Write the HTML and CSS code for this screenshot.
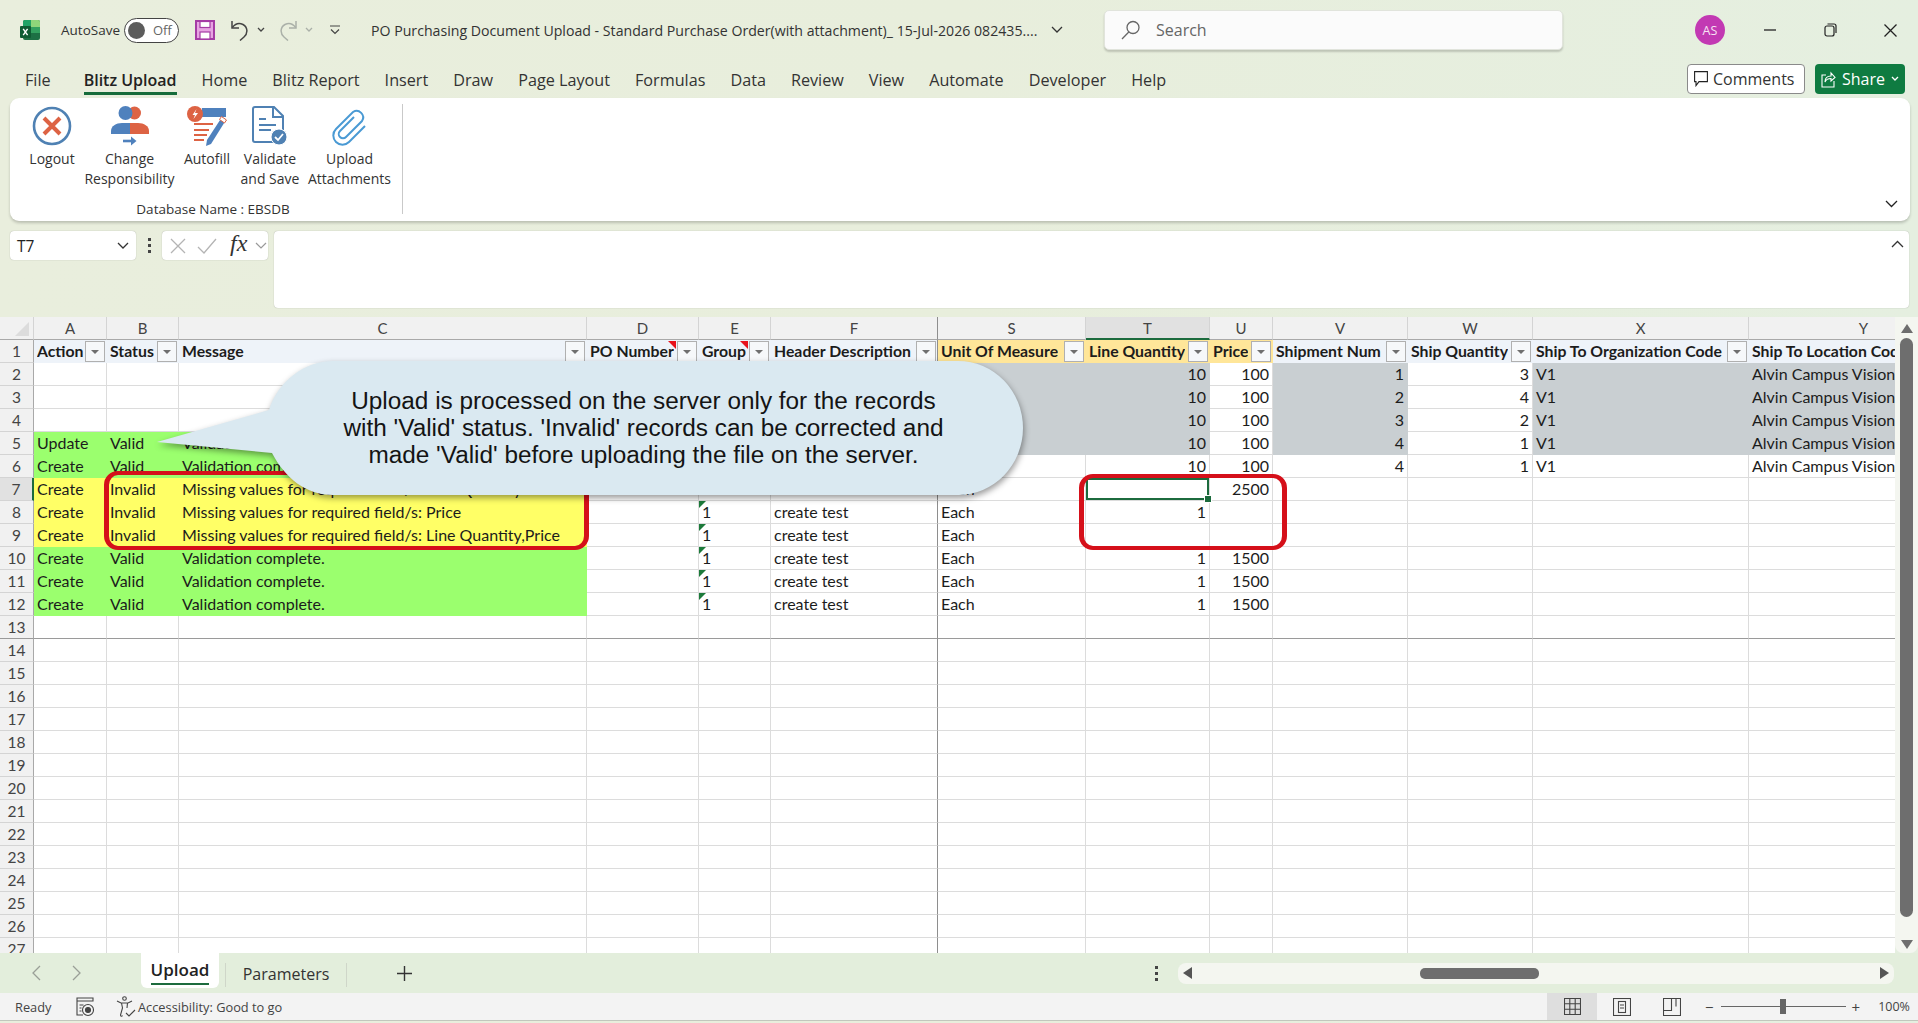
FILE: index.html
```html
<!DOCTYPE html>
<html>
<head>
    <meta charset="UTF-8">
    <title>PO Purchasing Document Upload</title>
    <link rel="stylesheet" href="styles.css">
</head>

<body>
<div class="app">
    <!-- title bar -->
    <div class="titlebar">
        <svg class="xl-logo" width="20" height="20" viewBox="0 0 20 20"><rect x="3" y="0" width="17" height="20" rx="2" fill="#1d7044"/><path d="M3 2a2 2 0 0 1 2-2h6v7H3z" fill="#21a366"/><path d="M11 0h7a2 2 0 0 1 2 2v5h-9z" fill="#8fd67a"/><rect x="11" y="7" width="9" height="6" fill="#33a15f"/><rect x="0" y="6" width="11" height="12" rx="1" fill="#0f5c33"/><path d="M3.2 8.8l4.4 6.4M7.6 8.8l-4.4 6.4" stroke="#fff" stroke-width="1.4"/></svg>
        <span class="autosave">AutoSave</span>
        <div class="toggle"><i class="knob"></i><span>Off</span></div>
        <svg class="save" width="20" height="20" viewBox="0 0 20 20"><path d="M1 1h18v18H1z" fill="#e7a3e2" stroke="#a53ba5" stroke-width="2"/><rect x="5" y="1.5" width="10" height="6" fill="#fff" stroke="#a53ba5" stroke-width="1.2"/><rect x="5" y="12" width="10" height="7" fill="#fff" stroke="#a53ba5" stroke-width="1.2"/></svg>
        <svg class="undo" width="18" height="21" viewBox="0 0 18 21" fill="none" stroke="#444" stroke-width="1.5"><path d="M1 1v7h7"/><path d="M1.3 7.5C4 4 8 2.5 12 4.5c5 3 5 9 1 12.5l-4 3.5"/></svg>
        <svg class="chev small-chev" width="8" height="6" viewBox="0 0 8 6" fill="none" stroke="#444" stroke-width="1.3"><path d="M1 1l3 3 3-3"/></svg>
        <svg class="redo" width="18" height="21" viewBox="0 0 18 21" fill="none" stroke="#aab0a8" stroke-width="1.5"><path d="M17 1v7h-7"/><path d="M16.7 7.5C14 4 10 2.5 6 4.5c-5 3-5 9-1 12.5l4 3.5"/></svg>
        <svg class="chev redo-chev" width="8" height="6" viewBox="0 0 8 6" fill="none" stroke="#aab0a8" stroke-width="1.3"><path d="M1 1l3 3 3-3"/></svg>
        <svg class="custom" width="10" height="10" viewBox="0 0 10 10" fill="none" stroke="#444" stroke-width="1.2"><path d="M0 1h10M1 4.5l4 4 4-4"/></svg>
        <span class="doc-title">PO Purchasing Document Upload - Standard Purchase Order(with attachment)_ 15-Jul-2026 082435....</span>
        <svg class="doc-chev" width="12" height="8" viewBox="0 0 12 8" fill="none" stroke="#333" stroke-width="1.3"><path d="M1 1l5 5 5-5"/></svg>
        <div class="search">
            <svg width="20" height="20" viewBox="0 0 20 20" fill="none" stroke="#666" stroke-width="1.3"><circle cx="12" cy="7.5" r="6"/><path d="M7.8 12L1 19"/></svg>
            <span>Search</span>
        </div>
        <div class="avatar">AS</div>
        <svg class="win-min" width="12" height="2" viewBox="0 0 12 2"><path d="M0 1h12" stroke="#222" stroke-width="1.3"/></svg>
        <svg class="win-max" width="13" height="14" viewBox="0 0 13 14" fill="none" stroke="#222" stroke-width="1.2"><rect x="1" y="3" width="9" height="10" rx="2"/><path d="M3.5 1H10a2 2 0 0 1 2 2v7"/></svg>
        <svg class="win-close" width="13" height="13" viewBox="0 0 13 13" fill="none" stroke="#222" stroke-width="1.3"><path d="M.5.5l12 12M12.5.5l-12 12"/></svg>
    </div>

    <!-- ribbon tabs -->
    <div class="tabbar">
        <a class="file">File</a>
        <a class="active">Blitz Upload</a>
        <a>Home</a>
        <a>Blitz Report</a>
        <a>Insert</a>
        <a>Draw</a>
        <a>Page Layout</a>
        <a>Formulas</a>
        <a>Data</a>
        <a>Review</a>
        <a>View</a>
        <a>Automate</a>
        <a>Developer</a>
        <a>Help</a>
        <div class="comments">
            <svg width="14" height="16" viewBox="0 0 14 16" fill="none" stroke="#222" stroke-width="1.1"><path d="M.6.6h12.8v10H5l-3 4v-4H.6z"/></svg>
            <span>Comments</span>
        </div>
        <div class="share">
            <svg width="15" height="18" viewBox="0 0 15 18" fill="none" stroke="#fff" stroke-width="1.1"><path d="M5 5H1v12h12v-6"/><path d="M4 12c0-4 2-6 6-6V3l4 4.5L10 11V8.5c-3 0-5 1-6 3.5z"/></svg>
            <span>Share</span>
            <svg width="8" height="6" viewBox="0 0 8 6" fill="none" stroke="#fff" stroke-width="1.3"><path d="M1 1l3 3 3-3"/></svg>
        </div>
    </div>

    <!-- ribbon -->
    <div class="ribbon">
        <div class="rb-group">
            <div class="rb-buttons">
                <div class="rb-btn w-logout">
                    <svg width="40" height="40" viewBox="0 0 40 40"><circle cx="20" cy="20" r="18" fill="#fff" stroke="#4f81b3" stroke-width="2.6"/><path d="M12 12l16 16M28 12L12 28" stroke="#dd6344" stroke-width="4"/></svg>
                    <span>Logout</span>
                </div>
                <div class="rb-btn w-change">
                    <svg width="40" height="40" viewBox="0 0 40 40"><circle cx="24.5" cy="7" r="6.5" fill="#dd6344"/><circle cx="15.5" cy="7" r="7" fill="#4f81bd"/><path d="M1 28v-3c0-5 5-8 11-8h8v11z" fill="#4f81bd"/><path d="M20 17h8c6 0 11 3 11 8v3H20z" fill="#dd6344"/><path d="M13 35h10" stroke="#4f81bd" stroke-width="2.6"/><path d="M21 30.5l5.5 4.5-5.5 4.5z" fill="#4f81bd"/></svg>
                    <span>Change<br>Responsibility</span>
                </div>
                <div class="rb-btn w-autofill">
                    <svg width="40" height="40" viewBox="0 0 40 40"><rect x="15" y="2" width="24" height="9" fill="#4f81bd"/><g stroke="#dd6344" stroke-width="1.8"><path d="M7 18h19M7 24h15M7 29h13M7 34h10"/></g><circle cx="8" cy="8" r="8" fill="#dd6344"/><path d="M9.5 3L5.5 9H8l-1.5 4L11 7H8z" fill="#fff"/><path d="M35 11l4 3-15 24-5 2 1-6z" fill="#4f81bd"/><path d="M34.5 10.5l5 3.500-2 3-5-3.500z" fill="#fff" stroke="#dd6344" stroke-width="1"/></svg>
                    <span>Autofill</span>
                </div>
                <div class="rb-btn w-validate">
                    <svg width="36" height="40" viewBox="0 0 36 40"><path d="M3 1h19l9 9v24a2 2 0 0 1-2 2H3a2 2 0 0 1-2-2V3a2 2 0 0 1 2-2z" fill="#fff" stroke="#4f81b3" stroke-width="2"/><path d="M21 1v10h10" fill="none" stroke="#4f81b3" stroke-width="2"/><path d="M7 13h7M7 19h17M7 24h12" stroke="#4f81b3" stroke-width="1.8"/><circle cx="27" cy="31" r="8" fill="#4f81b3" stroke="#fff" stroke-width="1"/><path d="M23 31l3 3 5-6" fill="none" stroke="#fff" stroke-width="1.8"/></svg>
                    <span>Validate<br>and Save</span>
                </div>
                <div class="rb-btn w-upload">
                    <svg width="36" height="40" viewBox="0 -3 36 40" fill="none" stroke="#4a9ad4" stroke-width="2"><path d="M22 8L8 22a4 4 0 0 0 6 6L30 12a6.5 6.5 0 0 0-9-9L4 20a9 9 0 0 0 13 13L33 17"/></svg>
                    <span>Upload<br>Attachments</span>
                </div>
            </div>
            <div class="rb-caption">Database Name : EBSDB</div>
        </div>
        <svg class="rb-collapse" width="13" height="8" viewBox="0 0 13 8" fill="none" stroke="#222" stroke-width="1.3"><path d="M1 1l5.5 5.500L12 1"/></svg>
    </div>

    <!-- formula bar -->
    <div class="formulabar">
        <div class="namebox">
            <span>T7</span>
            <svg width="12" height="8" viewBox="0 0 12 8" fill="none" stroke="#333" stroke-width="1.3"><path d="M1 1l5 5 5-5"/></svg>
        </div>
        <div class="fb-dots"><i></i><i></i><i></i></div>
        <div class="fb-tools">
            <svg width="16" height="16" viewBox="0 0 16 16" stroke="#b4b4b4" stroke-width="1.3"><path d="M1 1l14 14M15 1L1 15"/></svg>
            <svg width="20" height="16" viewBox="0 0 20 16" fill="none" stroke="#b4b4b4" stroke-width="1.3"><path d="M1 9l6 6L19 1"/></svg>
            <span class="fx">fx</span>
            <svg width="12" height="8" viewBox="0 0 12 8" fill="none" stroke="#999" stroke-width="1.2"><path d="M1 1l5 5 5-5"/></svg>
        </div>
        <div class="fb-input">
            <svg width="13" height="8" viewBox="0 0 13 8" fill="none" stroke="#333" stroke-width="1.3"><path d="M1 7l5.5-5.500L12 7"/></svg>
        </div>
    </div>

    <!-- grid -->
    <div class="gridarea">
        <div class="sheet-wrap">
            <table class="sheet">
                <colgroup>
                    <col class="c-rh"><col class="c-a"><col class="c-b"><col class="c-c"><col class="c-d"><col class="c-e"><col class="c-f"><col class="c-s"><col class="c-t"><col class="c-u"><col class="c-v"><col class="c-w"><col class="c-x"><col class="c-y">
                </colgroup>
                <tr class="letters"><th class="corner"></th><th>A</th><th>B</th><th>C</th><th>D</th><th>E</th><th>F</th><th>S</th><th class="cur-col">T</th><th>U</th><th>V</th><th>W</th><th>X</th><th>Y</th></tr>
                <tr class="heads"><th class="rh">1</th>
                    <td><div class="hd"><span>Action</span><i class="fbtn"></i></div></td>
                    <td><div class="hd"><span>Status</span><i class="fbtn"></i></div></td>
                    <td><div class="hd"><span>Message</span><i class="fbtn"></i></div></td>
                    <td><div class="hd"><span>PO Number</span><i class="fbtn note"></i></div></td>
                    <td><div class="hd"><span>Group</span><i class="fbtn note"></i></div></td>
                    <td><div class="hd"><span>Header Description</span><i class="fbtn"></i></div></td>
                    <td class="req"><div class="hd"><span>Unit Of Measure</span><i class="fbtn"></i></div></td>
                    <td class="req"><div class="hd"><span>Line Quantity</span><i class="fbtn"></i></div></td>
                    <td class="req"><div class="hd"><span>Price</span><i class="fbtn"></i></div></td>
                    <td><div class="hd"><span>Shipment Num</span><i class="fbtn"></i></div></td>
                    <td><div class="hd"><span>Ship Quantity</span><i class="fbtn"></i></div></td>
                    <td><div class="hd"><span>Ship To Organization Code</span><i class="fbtn"></i></div></td>
                    <td><div class="hd"><span>Ship To Location Code</span><i class="fbtn"></i></div></td>
                </tr>
                <tr><th class="rh">2</th><td></td><td></td><td></td><td></td><td></td><td></td><td class="gr"></td><td class="gr num">10</td><td class="num">100</td><td class="gr num">1</td><td class="num">3</td><td class="gr">V1</td><td class="gr">Alvin Campus Vision</td></tr>
                <tr><th class="rh">3</th><td></td><td></td><td></td><td></td><td></td><td></td><td class="gr"></td><td class="gr num">10</td><td class="num">100</td><td class="gr num">2</td><td class="num">4</td><td class="gr">V1</td><td class="gr">Alvin Campus Vision</td></tr>
                <tr><th class="rh">4</th><td></td><td></td><td></td><td></td><td></td><td></td><td class="gr"></td><td class="gr num">10</td><td class="num">100</td><td class="gr num">3</td><td class="num">2</td><td class="gr">V1</td><td class="gr">Alvin Campus Vision</td></tr>
                <tr><th class="rh">5</th><td class="ok">Update</td><td class="ok">Valid</td><td class="ok">Validation complete.</td><td></td><td></td><td></td><td class="gr"></td><td class="gr num">10</td><td class="num">100</td><td class="gr num">4</td><td class="num">1</td><td class="gr">V1</td><td class="gr">Alvin Campus Vision</td></tr>
                <tr><th class="rh">6</th><td class="ok">Create</td><td class="ok">Valid</td><td class="ok">Validation complete.</td><td></td><td></td><td></td><td></td><td class="num">10</td><td class="num">100</td><td class="num">4</td><td class="num">1</td><td>V1</td><td>Alvin Campus Vision</td></tr>
                <tr><th class="rh cur-row">7</th><td class="bad">Create</td><td class="bad">Invalid</td><td class="bad">Missing values for required field/s: Line Quantity</td><td></td><td class="tri">1</td><td>create test</td><td>Each</td><td class="sel"></td><td class="num">2500</td><td></td><td></td><td></td><td></td></tr>
                <tr><th class="rh">8</th><td class="bad">Create</td><td class="bad">Invalid</td><td class="bad">Missing values for required field/s: Price</td><td></td><td class="tri">1</td><td>create test</td><td>Each</td><td class="num">1</td><td></td><td></td><td></td><td></td><td></td></tr>
                <tr><th class="rh">9</th><td class="bad">Create</td><td class="bad">Invalid</td><td class="bad">Missing values for required field/s: Line Quantity,Price</td><td></td><td class="tri">1</td><td>create test</td><td>Each</td><td></td><td></td><td></td><td></td><td></td><td></td></tr>
                <tr><th class="rh">10</th><td class="ok">Create</td><td class="ok">Valid</td><td class="ok">Validation complete.</td><td></td><td class="tri">1</td><td>create test</td><td>Each</td><td class="num">1</td><td class="num">1500</td><td></td><td></td><td></td><td></td></tr>
                <tr><th class="rh">11</th><td class="ok">Create</td><td class="ok">Valid</td><td class="ok">Validation complete.</td><td></td><td class="tri">1</td><td>create test</td><td>Each</td><td class="num">1</td><td class="num">1500</td><td></td><td></td><td></td><td></td></tr>
                <tr><th class="rh">12</th><td class="ok">Create</td><td class="ok">Valid</td><td class="ok">Validation complete.</td><td></td><td class="tri">1</td><td>create test</td><td>Each</td><td class="num">1</td><td class="num">1500</td><td></td><td></td><td></td><td></td></tr>
                <tr class="split"><th class="rh">13</th><td></td><td></td><td></td><td></td><td></td><td></td><td></td><td></td><td></td><td></td><td></td><td></td><td></td></tr>
                <tr><th class="rh">14</th><td></td><td></td><td></td><td></td><td></td><td></td><td></td><td></td><td></td><td></td><td></td><td></td><td></td></tr>
                <tr><th class="rh">15</th><td></td><td></td><td></td><td></td><td></td><td></td><td></td><td></td><td></td><td></td><td></td><td></td><td></td></tr>
                <tr><th class="rh">16</th><td></td><td></td><td></td><td></td><td></td><td></td><td></td><td></td><td></td><td></td><td></td><td></td><td></td></tr>
                <tr><th class="rh">17</th><td></td><td></td><td></td><td></td><td></td><td></td><td></td><td></td><td></td><td></td><td></td><td></td><td></td></tr>
                <tr><th class="rh">18</th><td></td><td></td><td></td><td></td><td></td><td></td><td></td><td></td><td></td><td></td><td></td><td></td><td></td></tr>
                <tr><th class="rh">19</th><td></td><td></td><td></td><td></td><td></td><td></td><td></td><td></td><td></td><td></td><td></td><td></td><td></td></tr>
                <tr><th class="rh">20</th><td></td><td></td><td></td><td></td><td></td><td></td><td></td><td></td><td></td><td></td><td></td><td></td><td></td></tr>
                <tr><th class="rh">21</th><td></td><td></td><td></td><td></td><td></td><td></td><td></td><td></td><td></td><td></td><td></td><td></td><td></td></tr>
                <tr><th class="rh">22</th><td></td><td></td><td></td><td></td><td></td><td></td><td></td><td></td><td></td><td></td><td></td><td></td><td></td></tr>
                <tr><th class="rh">23</th><td></td><td></td><td></td><td></td><td></td><td></td><td></td><td></td><td></td><td></td><td></td><td></td><td></td></tr>
                <tr><th class="rh">24</th><td></td><td></td><td></td><td></td><td></td><td></td><td></td><td></td><td></td><td></td><td></td><td></td><td></td></tr>
                <tr><th class="rh">25</th><td></td><td></td><td></td><td></td><td></td><td></td><td></td><td></td><td></td><td></td><td></td><td></td><td></td></tr>
                <tr><th class="rh">26</th><td></td><td></td><td></td><td></td><td></td><td></td><td></td><td></td><td></td><td></td><td></td><td></td><td></td></tr>
                <tr><th class="rh">27</th><td></td><td></td><td></td><td></td><td></td><td></td><td></td><td></td><td></td><td></td><td></td><td></td><td></td></tr>
            </table>
        </div>
        <div class="vscroll">
            <i class="arr-up"></i>
            <i class="vthumb"></i>
            <i class="arr-down"></i>
        </div>
    </div>

    <!-- sheet tabs -->
    <div class="sheetbar">
        <svg class="nav-l" width="9" height="16" viewBox="0 0 9 16" fill="none" stroke="#9a9f97" stroke-width="1.3"><path d="M8 1L1 8l7 7"/></svg>
        <svg class="nav-r" width="9" height="16" viewBox="0 0 9 16" fill="none" stroke="#9a9f97" stroke-width="1.3"><path d="M1 1l7 7-7 7"/></svg>
        <div class="tab-on"><span>Upload</span></div>
        <i class="tab-sep first"></i>
        <div class="tab-off">Parameters</div>
        <i class="tab-sep"></i>
        <svg class="tab-add" width="15" height="15" viewBox="0 0 15 15" stroke="#333" stroke-width="1.4"><path d="M7.5 0v15M0 7.5h15"/></svg>
        <div class="split-dots"><i></i><i></i><i></i></div>
        <div class="hscroll">
            <i class="arr-left"></i>
            <i class="hthumb"></i>
            <i class="arr-right"></i>
        </div>
    </div>

    <!-- status bar -->
    <div class="statusbar">
        <span class="ready">Ready</span>
        <svg class="macro" width="18" height="20" viewBox="0 0 18 20" fill="none" stroke="#444" stroke-width="1.1"><path d="M1 1h16v3H1zM1 4v14h6"/><path d="M3.5 8h4M3.5 11h2M3.5 14h2"/><circle cx="12" cy="13" r="5.5"/><circle cx="12" cy="13" r="2.5" fill="#444"/></svg>
        <svg class="a11y" width="20" height="22" viewBox="0 0 20 22" fill="none" stroke="#444" stroke-width="1.1"><circle cx="8.5" cy="2.5" r="1.8"/><path d="M1 5l4 2h7l4-2M5.5 7l1 5-2 7c0 1.5 1.5 1.5 2 .5M11.5 7l-.5 5"/><path d="M10 17l3 3 6-6"/></svg>
        <span class="a11y-text">Accessibility: Good to go</span>
        <div class="view-btn on">
            <svg width="17" height="17" viewBox="0 0 17 17" fill="none" stroke="#444" stroke-width="1.1"><path d="M.5.5h16v16H.5zM.5 5.8h16M.5 11.2h16M5.8.5v16M11.2.5v16"/></svg>
        </div>
        <div class="view-btn">
            <svg width="18" height="18" viewBox="0 0 18 18" fill="none" stroke="#444" stroke-width="1.1"><rect x=".5" y=".5" width="17" height="17"/><rect x="5.5" y="3.5" width="7" height="11"/><path d="M7 7h4M7 10h4"/></svg>
        </div>
        <div class="view-btn">
            <svg width="18" height="18" viewBox="0 0 18 18" fill="none" stroke="#444" stroke-width="1.1"><path d="M.5.5h17v17H.5zM.5 12.5h8V.5M13 .5v8"/></svg>
        </div>
        <span class="zoom-minus">−</span>
        <div class="zoom-track"><i></i></div>
        <span class="zoom-plus">+</span>
        <span class="zoom-val">100%</span>
    </div>

    <!-- annotations over the sheet -->
    <div class="redbox box-left"></div>
    <div class="redbox box-right"></div>
    <div class="callout">
        <svg width="880" height="150" viewBox="150 355 880 150"><path d="M157 442L269 410C278 381 305 361 333 361H958A65 67 0 0 1 958 495H333C306 495 285 478 272 453Z" fill="#dae9f1"/></svg>
        <p>Upload is processed on the server only for the records<br>with 'Valid' status. 'Invalid' records can be corrected and<br>made 'Valid' before uploading the file on the server.</p>
    </div>
</div>
</body>
</html>
```

FILE: styles.css
```css
* {
    box-sizing: border-box;
}
html, body {
    margin: 0;
    height: 100%;
    overflow: hidden;
}
body {
    font-family: "Open Sans", "Noto Sans", sans-serif;
    color: #222;
    background-color: #e6eedd;
}
.app {
    position: relative;
    width: 1918px;
    height: 1023px;
    display: flex;
    flex-direction: column;
    background: linear-gradient(90deg, #e9eedd 0%, #e8eedc 50%, #e5efe0 100%);
}

/* title bar */
.titlebar {
    height: 60px;
    display: flex;
    align-items: center;
    flex: none;
}
.xl-logo { margin-left: 20px; }
.autosave {
    margin-left: 21px;
    font-size: 13.5px;
    width: 60px;
    color: #333;
}
.toggle {
    margin-left: 3px;
    width: 55px;
    height: 25px;
    border: 1.5px solid #444;
    border-radius: 13px;
    background-color: #fff;
    display: flex;
    align-items: center;
    padding-left: 3px;
    font-size: 13px;
    color: #666;
}
.knob {
    width: 17px;
    height: 17px;
    border-radius: 50%;
    background-color: #5c5c5c;
    margin-right: 8px;
}
.save { margin-left: 16px; }
.undo { margin-left: 16px; }
.small-chev { margin-left: 8px; }
.redo { margin-left: 14px; }
.redo-chev { margin-left: 8px; }
.custom { margin-left: 17px; }
.doc-title {
    margin-left: 31px;
    font-size: 14.15px;
    width: 670px;
    white-space: nowrap;
    overflow: hidden;
    color: #333;
}
.doc-chev { margin-left: 10px; }
.search {
    margin-left: 41px;
    width: 459px;
    height: 40px;
    margin-top: -1px;
    background-color: #fbfbfb;
    border: 1px solid #e1e4dc;
    border-radius: 5px;
    box-shadow: 0 2px 2px rgba(0, 0, 0, .18);
    display: flex;
    align-items: center;
    padding-left: 16px;
    font-size: 16px;
    color: #666;
}
.search span { margin-left: 15px; }
.avatar {
    margin-left: 132px;
    width: 30px;
    height: 30px;
    border-radius: 50%;
    background-color: #c239b3;
    color: #f7e3f4;
    font-size: 12.5px;
    display: flex;
    align-items: center;
    justify-content: center;
}
.win-min { margin-left: 39px; }
.win-max { margin-left: 48px; }
.win-close { margin-left: 47px; }

/* ribbon tabs */
.tabbar {
    height: 38px;
    flex: none;
    display: flex;
    align-items: flex-start;
    padding-left: 25px;
    gap: 25px;
    font-size: 16.2px;
    color: #333;
}
.tabbar a {
    height: 35px;
    line-height: 41px;
    white-space: nowrap;
}
.tabbar a.file { margin-right: 8px; }
.tabbar a.active {
    font-weight: 600;
    font-size: 16px;
    color: #222;
    border-bottom: 3px solid #166c3b;
}
.comments {
    position: absolute;
    left: 1687px;
    top: 64px;
    width: 118px;
    height: 30px;
    background-color: #fff;
    border: 1px solid #8a8a8a;
    border-radius: 4px;
    display: flex;
    align-items: center;
    padding-left: 6px;
    gap: 5px;
    font-size: 16px;
}
.share {
    position: absolute;
    left: 1815px;
    top: 64px;
    width: 90px;
    height: 30px;
    background-color: #0f7b41;
    color: #fff;
    border-radius: 4px;
    display: flex;
    align-items: center;
    padding-left: 6px;
    gap: 6px;
    font-size: 16px;
}

/* ribbon */
.ribbon {
    position: relative;
    flex: none;
    height: 123px;
    margin: 0 8px 0 10px;
    background-color: #fff;
    border-radius: 9px;
    box-shadow: 0 2px 3px rgba(0, 0, 0, .2);
}
.rb-group {
    width: 393px;
    height: 110px;
    margin-top: 6px;
    position: absolute;
    top: 0;
    left: 0;
    border-right: 1px solid #c9c9c9;
    padding: 2px 0 0 14px;
    display: flex;
    flex-direction: column;
}
.rb-buttons {
    display: flex;
    height: 86px;
}
.rb-btn {
    display: flex;
    flex-direction: column;
    align-items: center;
    text-align: center;
    font-size: 14px;
    line-height: 20px;
    color: #333;
    white-space: nowrap;
}
.rb-btn svg { flex: none; height: 40px; margin-bottom: 2.5px; }
.w-logout { width: 56px; }
.w-change { width: 99px; }
.w-autofill { width: 56px; }
.w-validate { width: 70px; }
.w-upload { width: 89px; }
.rb-caption {
    margin-left: -14px;
    text-align: center;
    font-size: 13.5px;
    line-height: 18px;
    margin-top: 11px;
    padding-left: 14px;
    color: #333;
    white-space: nowrap;
}
.rb-collapse {
    position: absolute;
    right: 12px;
    bottom: 13px;
}

/* formula bar */
.formulabar {
    flex: none;
    height: 77px;
    margin: 10px 9px 9px 10px;
    display: flex;
    align-items: flex-start;
}
.namebox {
    width: 126px;
    height: 29px;
    background-color: #fff;
    border-radius: 4px;
    box-shadow: 0 0 1px rgba(0, 0, 0, .35);
    display: flex;
    align-items: center;
    justify-content: space-between;
    padding: 0 7px;
    font-size: 15.5px;
}
.fb-dots {
    width: 26px;
    height: 29px;
    display: flex;
    flex-direction: column;
    align-items: center;
    justify-content: center;
    gap: 3px;
}
.fb-dots i {
    width: 3px;
    height: 3px;
    background-color: #444;
}
.fb-tools {
    width: 106px;
    height: 29px;
    background-color: #fff;
    border-radius: 4px;
    box-shadow: 0 0 1px rgba(0, 0, 0, .35);
    display: flex;
    align-items: center;
    padding-left: 8px;
    gap: 5px;
}
.fb-tools svg:nth-child(2) { margin-left: 6px; }
.fx {
    font-family: "Liberation Serif", serif;
    font-style: italic;
    font-size: 24px;
    color: #333;
    margin: -4px 3px 0 8px;
}
.fb-input {
    position: relative;
    margin-left: 6px;
    flex: 1;
    height: 77px;
    background-color: #fff;
    border-radius: 4px;
    box-shadow: 0 0 1px rgba(0, 0, 0, .35);
}
.fb-input svg {
    position: absolute;
    right: 5px;
    top: 9px;
}

/* grid */
.gridarea {
    flex: none;
    height: 636px;
    display: flex;
}
.sheet-wrap {
    width: 1895px;
    height: 636px;
    overflow: hidden;
    background-color: #fff;
}
.sheet {
    table-layout: fixed;
    width: 1979px;
    border-collapse: separate;
    border-spacing: 0;
    font-family: Lato, "Open Sans", sans-serif;
    font-size: 16px;
    color: #1c1c1c;
}
.c-rh { width: 34px; }
.c-a { width: 73px; }
.c-b { width: 72px; }
.c-c { width: 408px; }
.c-d { width: 112px; }
.c-e { width: 72px; }
.c-f { width: 167px; }
.c-s { width: 148px; }
.c-t { width: 124px; }
.c-u { width: 63px; }
.c-v { width: 135px; }
.c-w { width: 125px; }
.c-x { width: 216px; }
.c-y { width: 230px; }
.sheet tr { height: 23px; }
.sheet td {
    position: relative;
    height: 23px;
    padding: 0 3px 2px 3px;
    border-right: 1px solid #dcdcdc;
    border-bottom: 1px solid #dcdcdc;
    white-space: nowrap;
    overflow: hidden;
    vertical-align: middle;
}
.letters th {
    height: 23px;
    padding: 0;
    background-color: #f1f1f1;
    border-right: 1px solid #d4d4d4;
    border-bottom: 1px solid #a9a9a9;
    font-weight: normal;
    font-size: 15px;
    color: #444;
}
.letters .cur-col {
    background-color: #e1e1e1;
    border-bottom: 2px solid #1c6b3d;
}
.corner {
    position: relative;
}
.corner::after {
    content: "";
    position: absolute;
    right: 4px;
    bottom: 3px;
    border-style: solid;
    border-width: 0 0 14px 14px;
    border-color: transparent transparent #dcdcdc transparent;
}
.rh {
    padding: 0;
    background-color: #f1f1f1;
    border-right: 1px solid #a9a9a9;
    border-bottom: 1px solid #d4d4d4;
    font-weight: normal;
    font-size: 15.5px;
    color: #444;
}
.cur-row {
    background-color: #e1e1e1;
    border-right: 2px solid #1c6b3d;
}
/* frozen pane lines */
.sheet tr > :nth-child(7) { border-right-color: #8e8e8e; }
.split td, .split th { border-bottom-color: #9a9a9a; }

.sheet .heads td {
    padding: 0 0 0 3px;
    background-color: #eef3f9;
    border-right-color: #eef3f9;
    border-bottom-color: #eef3f9;
    font-weight: bold;
    font-size: 15.8px;
}
.sheet .heads td.req {
    background-color: #ffe699;
    border-right-color: #ffe699;
    border-bottom-color: #ffe699;
}
.sheet .heads td:nth-child(7) { border-right-color: #8e8e8e; }
.hd {
    display: flex;
    align-items: center;
    justify-content: space-between;
    height: 22px;
}
.hd span {
    overflow: hidden;
    white-space: nowrap;
    margin-top: -2px;
}
.fbtn {
    position: relative;
    flex: none;
    width: 20px;
    height: 21px;
    background-color: #f6f8fa;
    border: 1px solid #b0b0b0;
    margin-right: 1px;
}
.fbtn::after {
    content: "";
    position: absolute;
    left: 5px;
    top: 8px;
    border-style: solid;
    border-width: 4px 4px 0 4px;
    border-color: #6f6f6f transparent transparent transparent;
}
.fbtn.note::before {
    content: "";
    position: absolute;
    right: 20px;
    top: -1px;
    border-style: solid;
    border-width: 0 8px 8px 0;
    border-color: transparent #e8121c transparent transparent;
}
.sheet td.num { text-align: right; }
.sheet td.gr {
    background-color: #c9cfd2;
    border-color: #c9cfd2;
}
.sheet td.ok {
    background-color: #9bff6e;
    border-color: #9bff6e;
}
.sheet td.bad {
    background-color: #ffff66;
    border-color: #ffff66;
}
.sheet td.tri::before {
    content: "";
    position: absolute;
    left: 0;
    top: 0;
    border-style: solid;
    border-width: 7px 7px 0 0;
    border-color: #1c7a3a transparent transparent transparent;
}
.sheet td.sel {
    overflow: visible;
    box-shadow: inset 0 0 0 2px #1c6b3d;
}
.sel::after {
    content: "";
    position: absolute;
    right: -3px;
    bottom: -3px;
    width: 6px;
    height: 6px;
    background-color: #1c6b3d;
    border: 1px solid #fff;
    z-index: 1;
}
.vscroll {
    width: 23px;
    margin-left: 0;
    background-color: #f4f6f0;
    border-radius: 0 0 8px 8px;
    display: flex;
    flex-direction: column;
    align-items: center;
    padding-top: 7px;
}
.arr-up {
    border-style: solid;
    border-width: 0 6px 9px 6px;
    border-color: transparent transparent #6e6e6e transparent;
}
.vthumb {
    width: 13px;
    height: 579px;
    margin-top: 5px;
    border-radius: 7px;
    background-color: #6e6e6e;
}
.arr-down {
    margin-top: 23px;
    border-style: solid;
    border-width: 9px 6px 0 6px;
    border-color: #6e6e6e transparent transparent transparent;
}

/* sheet tabs */
.sheetbar {
    flex: none;
    height: 40px;
    display: flex;
    align-items: center;
    background-color: #e3eedc;
    font-size: 16px;
}
.nav-l { margin-left: 32px; }
.nav-r { margin-left: 31px; }
.tab-on {
    margin-left: 60px;
    align-self: flex-start;
    width: 78px;
    height: 35px;
    background-color: #fff;
    border-radius: 0 0 6px 6px;
    text-align: center;
    font-weight: 600;
    font-size: 17px;
}
.tab-on span {
    display: inline-block;
    height: 32px;
    line-height: 33px;
    border-bottom: 2px solid #1c6b3d;
}
.tab-sep {
    width: 1px;
    height: 24px;
    background-color: #cfd6c9;
    margin-top: 3px;
}
.tab-sep.first { margin-left: 6px; }
.tab-off {
    width: 120px;
    text-align: center;
    margin-top: 1px;
    color: #333;
}
.tab-add { margin-left: 50px; }
.split-dots {
    margin-left: 743px;
    display: flex;
    flex-direction: column;
    gap: 3px;
}
.split-dots i {
    width: 3px;
    height: 3px;
    background-color: #444;
}
.hscroll {
    margin-left: 20px;
    width: 716px;
    height: 21px;
    background-color: #f4f6f0;
    border-radius: 8px;
    display: flex;
    align-items: center;
    padding: 0 5px;
}
.arr-left {
    border-style: solid;
    border-width: 6px 9px 6px 0;
    border-color: transparent #555 transparent transparent;
}
.hthumb {
    width: 119px;
    height: 11px;
    margin-left: 228px;
    border-radius: 5px;
    background-color: #6e6e6e;
}
.arr-right {
    margin-left: auto;
    border-style: solid;
    border-width: 6px 0 6px 9px;
    border-color: transparent transparent transparent #555;
}

/* status bar */
.statusbar {
    flex: none;
    height: 28px;
    display: flex;
    align-items: center;
    background-color: #f3f3f3;
    border-bottom: 1px solid #c2c7bd;
    font-size: 12.8px;
    color: #444;
}
.ready { margin-left: 15px; width: 40px; }
.macro { margin-left: 21px; }
.a11y { margin-left: 22px; }
.a11y-text { margin-left: 2px; width: 150px; white-space: nowrap; }
.view-btn {
    width: 50px;
    height: 27px;
    display: flex;
    align-items: center;
    justify-content: center;
}
.view-btn.on {
    margin-left: 1259px;
    background-color: #dedede;
}
.zoom-minus { margin-left: 8px; font-size: 15px; }
.zoom-track {
    position: relative;
    margin-left: 7px;
    width: 125px;
    height: 1px;
    background-color: #666;
}
.zoom-track i {
    position: absolute;
    left: 59px;
    top: -7px;
    width: 6px;
    height: 15px;
    background-color: #666;
}
.zoom-plus { margin-left: 6px; font-size: 15px; }
.zoom-val { margin-left: 18px; font-size: 12.5px; }

/* annotations */
.redbox {
    position: absolute;
    border-style: solid;
    border-color: #d5101a;
    border-width: 4px 5px;
    border-radius: 14px;
}
.box-left {
    left: 104px;
    top: 471px;
    width: 485px;
    height: 79px;
}
.box-right {
    left: 1079px;
    top: 474px;
    width: 208px;
    height: 76px;
}
.callout {
    position: absolute;
    left: 150px;
    top: 355px;
    width: 880px;
    height: 150px;
}
.callout svg {
    display: block;
    filter: drop-shadow(1px 3px 3px rgba(0, 0, 0, .4));
}
.callout p {
    position: absolute;
    left: 116px;
    top: 5px;
    width: 755px;
    height: 134px;
    margin: 0;
    display: flex;
    align-items: center;
    justify-content: center;
    text-align: center;
    font-family: "Liberation Sans", Arial, sans-serif;
    font-size: 24.35px;
    line-height: 27px;
    color: #141414;
}
```
